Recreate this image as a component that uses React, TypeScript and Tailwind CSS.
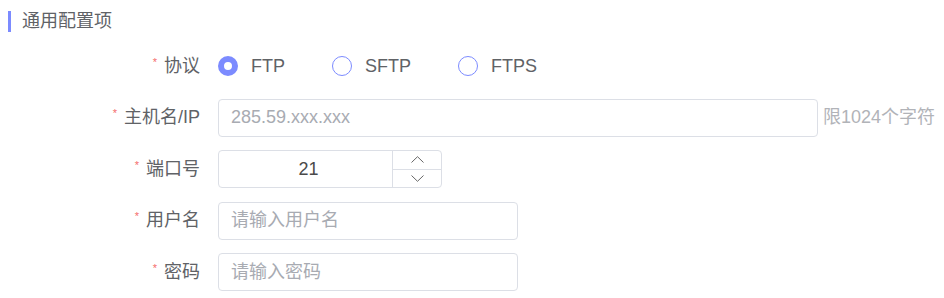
import { useState } from "react";

const FONT = { fontFamily: '"Liberation Sans", Arial, "Noto Sans CJK SC", sans-serif' };

const PROTOCOLS = ["FTP", "SFTP", "FTPS"];

function FieldLabel({ text }: { text: string }) {
  return (
    <div className="flex w-[200px] shrink-0 items-center justify-end">
      <span className="mr-[7px] -mt-[8px] text-[11px] leading-none text-[#f56c6c]">*</span>
      <span className="text-[18px] text-[#606266]">{text}</span>
    </div>
  );
}

function Radio({ label, checked, onClick }: { label: string; checked: boolean; onClick: () => void }) {
  return (
    <button type="button" onClick={onClick} className="flex items-center">
      <span
        className={
          checked
            ? "h-[20px] w-[20px] rounded-full border-[6px] border-[#7c8bff] bg-white"
            : "h-[20px] w-[20px] rounded-full border border-[#7c8bff] bg-white"
        }
      />
      <span className="ml-[13px] text-[18px] text-[#606266]">{label}</span>
    </button>
  );
}

export default function App() {
  const [protocol, setProtocol] = useState("FTP");
  const [port, setPort] = useState(21);

  return (
    <div className="h-[298px] w-[944px] overflow-hidden bg-white" style={FONT}>
      <div className="flex items-center pt-[11px] pl-[8px]">
        <div className="h-[21px] w-[3px] bg-[#7c8bff]" />
        <span className="ml-[11px] text-[18px] leading-[21px] text-[#606266]">通用配置项</span>
      </div>

      <div className="mt-[15px] flex flex-col gap-[13.5px]">
        <div className="flex h-[38px] items-center">
          <FieldLabel text="协议" />
          <div className="ml-[18px] flex items-center gap-[47px]">
            {PROTOCOLS.map((p) => (
              <Radio key={p} label={p} checked={protocol === p} onClick={() => setProtocol(p)} />
            ))}
          </div>
        </div>

        <div className="flex h-[38px] items-center">
          <FieldLabel text="主机名/IP" />
          <input
            className="ml-[18px] h-[38px] w-[600px] rounded-[4px] border border-[#dcdfe6] px-[12px] text-[18px] text-[#606266] outline-none placeholder:text-[#a8abb2]"
            placeholder="285.59.xxx.xxx"
          />
          <span className="ml-[5px] text-[18px] text-[#b1b3b8]">限1024个字符</span>
        </div>

        <div className="flex h-[38px] items-center">
          <FieldLabel text="端口号" />
          <div className="ml-[18px] flex h-[38px] w-[224px] rounded-[4px] border border-[#dcdfe6]">
            <div className="flex flex-1 items-center justify-center pl-[6px] text-[18px] text-[#4a4a4a]">{port}</div>
            <div className="flex w-[49px] flex-col border-l border-[#dcdfe6]">
              <button
                type="button"
                onClick={() => setPort(port + 1)}
                className="flex flex-1 items-center justify-center border-b border-[#dcdfe6]"
              >
                <svg width="13" height="7" viewBox="0 0 13 7" fill="none">
                  <path d="M0.5 6.5L6.5 0.7L12.5 6.5" stroke="#666" strokeWidth="1" />
                </svg>
              </button>
              <button
                type="button"
                onClick={() => setPort(Math.max(0, port - 1))}
                className="flex flex-1 items-center justify-center"
              >
                <svg width="13" height="7" viewBox="0 0 13 7" fill="none">
                  <path d="M0.5 0.5L6.5 6.3L12.5 0.5" stroke="#666" strokeWidth="1" />
                </svg>
              </button>
            </div>
          </div>
        </div>

        <div className="flex h-[38px] items-center">
          <FieldLabel text="用户名" />
          <input
            className="ml-[18px] h-[38px] w-[300px] rounded-[4px] border border-[#dcdfe6] px-[12px] text-[18px] text-[#606266] outline-none placeholder:text-[#a8abb2]"
            placeholder="请输入用户名"
          />
        </div>

        <div className="flex h-[38px] items-center">
          <FieldLabel text="密码" />
          <input
            type="password"
            className="ml-[18px] h-[38px] w-[300px] rounded-[4px] border border-[#dcdfe6] px-[12px] text-[18px] text-[#606266] outline-none placeholder:text-[#a8abb2]"
            placeholder="请输入密码"
          />
        </div>
      </div>
    </div>
  );
}
